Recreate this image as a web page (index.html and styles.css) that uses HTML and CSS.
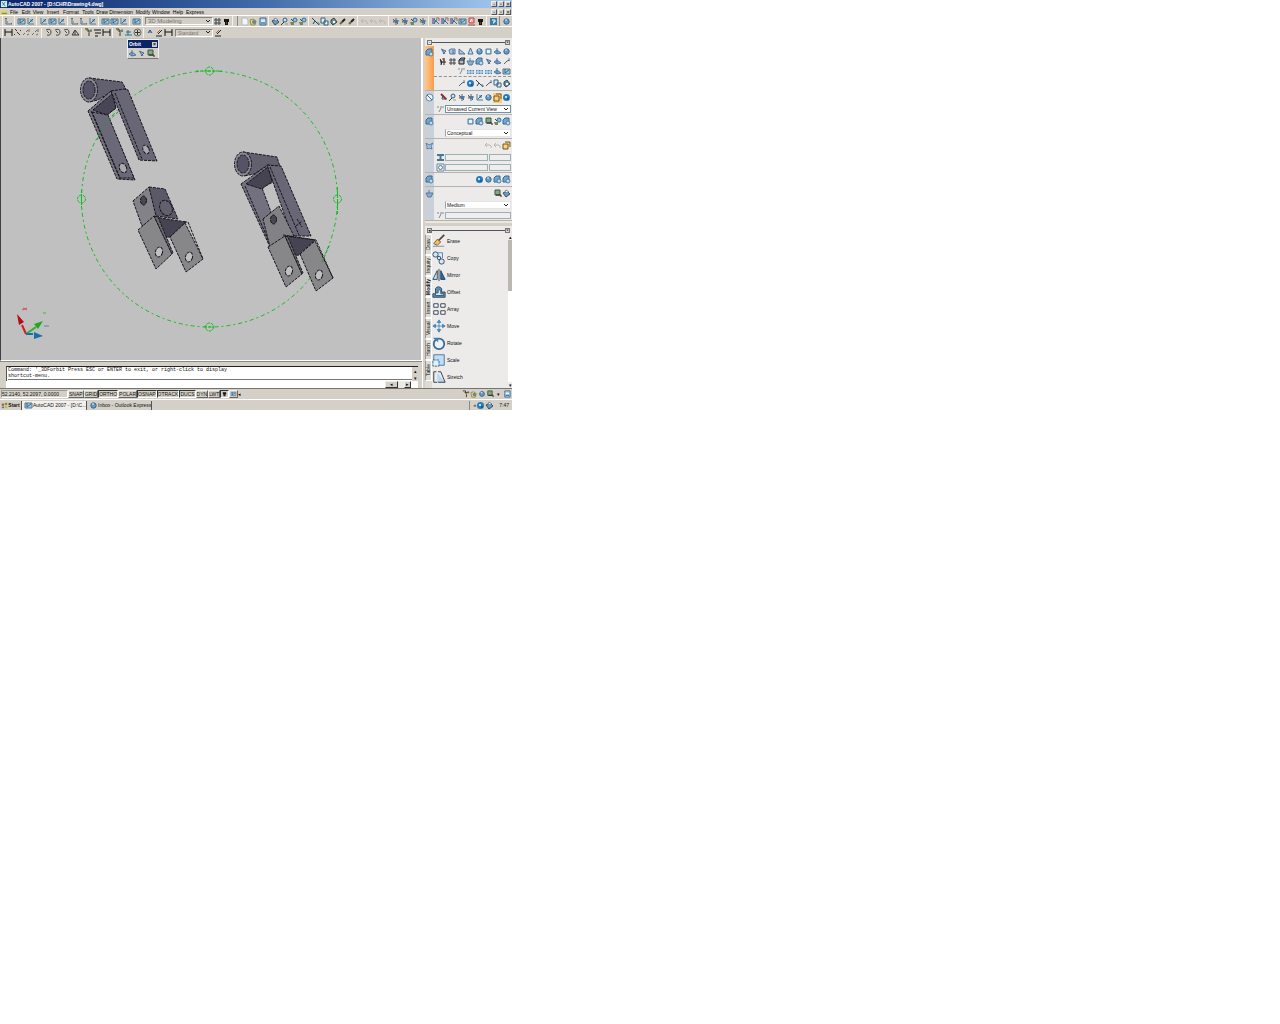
FILE: index.html
```
<!DOCTYPE html>
<html lang="en">
<head>
<meta charset="utf-8">
<title>AutoCAD 2007</title>
<link rel="stylesheet" href="styles.css">
</head>
<body>
<svg class="defs" aria-hidden="true">
<symbol id="ucs" viewBox="0 0 9 9"><path d="M2 1v6h6M1 2l1-1 1 1M7 6l1 1" fill="none" stroke="#536f82"/><path d="M3 5h1" stroke="#2779a7"/></symbol>
<symbol id="ucs2" viewBox="0 0 9 9"><path d="M2 1v6h6" fill="none" stroke="#55788c"/><path d="M4 2h3v3H4z" fill="#7aaecb"/><path d="M3 6l4-4" stroke="#246a96"/></symbol>
<symbol id="view" viewBox="0 0 9 9"><path d="M1 2h7v5H1z" fill="#a7c8d8" stroke="#557589"/><path d="M3 2v4l4-3" fill="none" stroke="#226a98"/></symbol>
<symbol id="page" viewBox="0 0 9 9"><path d="M2 1h4l2 2v5H2z" fill="#f5f7fa" stroke="#b3b9c2"/></symbol>
<symbol id="open" viewBox="0 0 9 9"><path d="M1 3l3-1 3 2-1 4H2z" fill="#f0d468" stroke="#9b8c50"/><circle cx="5" cy="5" r="2" fill="#5d8a9c"/></symbol>
<symbol id="save" viewBox="0 0 9 9"><path d="M2 1h6v7H2z" fill="#b9d4eb" stroke="#336b96"/><path d="M3 4h4" stroke="#fff"/><path d="M3 6h4" stroke="#38556e"/></symbol>
<symbol id="print" viewBox="0 0 9 9"><path d="M1 4l4-2 3 3-4 3z" fill="#6d9ab7" stroke="#394f68"/><path d="M3 3l1-2 3 2" fill="#fff" stroke="#718594"/></symbol>
<symbol id="find" viewBox="0 0 9 9"><circle cx="5" cy="3" r="2" fill="#c8e1f3" stroke="#345f84"/><path d="M4 5L1 8" stroke="#283c4c"/><path d="M5 7h3" stroke="#98a649"/></symbol>
<symbol id="zoomg" viewBox="0 0 9 9"><circle cx="6" cy="3" r="2" fill="#91c0df" stroke="#2f7099"/><path d="M1 5h4v3H2z" fill="#71895a"/><path d="M2 2l2 2" stroke="#304a57"/></symbol>
<symbol id="cut" viewBox="0 0 9 9"><path d="M1 1l7 7M2 7l2-3" stroke="#34424d" fill="none"/><path d="M6 6h2v2" stroke="#477eaa" fill="none"/></symbol>
<symbol id="copy" viewBox="0 0 9 9"><path d="M1 1h4v5H1zM4 4h4v4H4z" fill="#d8ebfa" stroke="#38627f"/></symbol>
<symbol id="paste" viewBox="0 0 9 9"><path d="M2 3l3-2 3 4-4 3-2-2z" fill="#6b929e" stroke="#344850"/><path d="M4 4h2v2H4z" fill="#fff"/></symbol>
<symbol id="brush" viewBox="0 0 9 9"><path d="M7 2L4 5" stroke="#222" stroke-width="2"/><path d="M4 5L2 7" stroke="#6d653c" stroke-width="2"/></symbol>
<symbol id="faint" viewBox="0 0 9 9"><path d="M3 2L1 4l2 2M2 4h4q2 1 1 3" fill="none" stroke="#bab6ae"/></symbol>
<symbol id="pan" viewBox="0 0 9 9"><path d="M5 1v7M2 4h6M2 2l5 5" stroke="#51657a"/><path d="M4 3h3v3H4z" fill="#417db3"/><path d="M2 5h3" stroke="#9c5b32"/></symbol>
<symbol id="tool" viewBox="0 0 9 9"><path d="M1 1h3v6H1z" fill="#8b84ad"/><path d="M3 2l5 5M6 2l-3 5" stroke="#267ba8"/><path d="M5 1h3v3" fill="none" stroke="#a8645a"/></symbol>
<symbol id="red" viewBox="0 0 9 9"><path d="M2 1h5v5H2z" fill="#efb0aa" stroke="#bd4543"/><path d="M1 8h7" stroke="#b9414f"/><path d="M5 2L3 5" stroke="#fff"/></symbol>
<symbol id="tee" viewBox="0 0 9 9"><path d="M2 2h5v3H6v3H3V5H2z" fill="#151515"/><path d="M4 6h1" stroke="#bb6b30"/></symbol>
<symbol id="help" viewBox="0 0 9 9"><path d="M1 1h7v7H1z" fill="#387ba4"/><path d="M3 3h3v2H4" fill="none" stroke="#fff"/><path d="M4 6h1" stroke="#fff"/></symbol>
<symbol id="dim" viewBox="0 0 9 9"><path d="M1 1v7M8 1v7M1 4h7" stroke="#111" fill="none"/></symbol>
<symbol id="dash" viewBox="0 0 9 9"><path d="M2 1l2 2M4 4l3 3M1 6l1 1M7 2l1 1" stroke="#334"/></symbol>
<symbol id="dash2" viewBox="0 0 9 9"><path d="M1 7l2-2M4 4l2-2M7 1v3M5 7l2-1" stroke="#6d6c6a"/></symbol>
<symbol id="arc" viewBox="0 0 9 9"><path d="M2 2q5-2 5 2T3 7M3 3l2 2" fill="none" stroke="#464646"/></symbol>
<symbol id="tri" viewBox="0 0 9 9"><path d="M4 2L1 7h7zM4 3v4" fill="none" stroke="#383838"/></symbol>
<symbol id="bolt" viewBox="0 0 9 9"><path d="M1 1h3v3M4 3h4M5 4v4" stroke="#333" fill="none"/><path d="M2 2l3 3" stroke="#b99d2c"/><path d="M6 2h2" stroke="#588a58"/></symbol>
<symbol id="lines" viewBox="0 0 9 9"><path d="M1 2h7M2 5h6M2 8h3" stroke="#111"/></symbol>
<symbol id="plus" viewBox="0 0 9 9"><circle cx="4.500" cy="4.500" r="3.500" fill="none" stroke="#61665a"/><path d="M2 4.500h5M4.500 2v5" stroke="#333"/></symbol>
<symbol id="level" viewBox="0 0 9 9"><path d="M1 7h7M4 2v5M2 4h5" stroke="#167496"/></symbol>
<symbol id="a" viewBox="0 0 9 9"><path d="M2 5l2-3 2 3M3 4h2" fill="none" stroke="#2755a2"/></symbol>
<symbol id="edit" viewBox="0 0 9 9"><path d="M1 8h6M3 6l4-4" stroke="#222"/><path d="M2 5l3-3" stroke="#b96830"/></symbol>
<symbol id="ball" viewBox="0 0 9 9"><circle cx="4.500" cy="4.500" r="2.700" fill="#6b99c3" stroke="#36658e"/><path d="M3 3h2" stroke="#e5f3ff"/></symbol>
<symbol id="box" viewBox="0 0 9 9"><path d="M1 3l2-1h4v5H2z" fill="#a9c8e2" stroke="#567a9d"/><path d="M5 3v4" stroke="#456b94"/></symbol>
<symbol id="wedge" viewBox="0 0 9 9"><path d="M2 2v5h6z" fill="#a9cae4" stroke="#4c7396"/></symbol>
<symbol id="cone" viewBox="0 0 9 9"><path d="M4.500 1L2 7h5z" fill="#c3daec" stroke="#49739b"/></symbol>
<symbol id="cyl" viewBox="0 0 9 9"><path d="M2 2h5v5H2z" fill="#a7cbe7" stroke="#51789a"/><path d="M3 3h3v3H3z" fill="#e8f4fc"/></symbol>
<symbol id="pyr" viewBox="0 0 9 9"><path d="M4 1v6M1 5l3-2 4 3-4 1z" fill="#83afd5" stroke="#4b76a1"/></symbol>
<symbol id="arrow" viewBox="0 0 9 9"><path d="M2 2l5 2-3 3M3 3l3 4" fill="#9ebddb" stroke="#4b6d8d"/></symbol>
<symbol id="man" viewBox="0 0 9 9"><path d="M1 2l2 3-1 3M5 1v7M3 5h4" stroke="#222"/><path d="M3 2h2v2" stroke="#a43232" fill="none"/></symbol>
<symbol id="hash" viewBox="0 0 9 9"><path d="M3 1v7M6 1v7M1 3h7M1 6h7" stroke="#444"/></symbol>
<symbol id="cubeb" viewBox="0 0 9 9"><path d="M2 3h5v4H2zM2 3l2-2h4L7 3" fill="#b0bac4" stroke="#1b2024"/></symbol>
<symbol id="grid" viewBox="0 0 9 9"><path d="M1 3h7v4H1z" fill="#5089b8"/><path d="M3 3v4M6 3v4M1 5h7" stroke="#d4e8f7"/></symbol>
<symbol id="spark" viewBox="0 0 9 9"><path d="M1 2h2M4 2h4M5 3L3 7" stroke="#7d8a96"/></symbol>
<symbol id="slash" viewBox="0 0 9 9"><path d="M2 7l3-3 3-1" fill="none" stroke="#56616b"/><path d="M6 2h2" stroke="#508bb6"/></symbol>
<symbol id="globe" viewBox="0 0 9 9"><circle cx="4.500" cy="4.500" r="3.500" fill="#267bbb"/><path d="M3 3h2v2H3z" fill="#bce4f8"/><path d="M5 6h2" stroke="#153f71"/></symbol>
<symbol id="redtool" viewBox="0 0 9 9"><path d="M2 1l5 5" stroke="#a72524" stroke-width="2"/><path d="M4 2l-1 4h5" fill="none" stroke="#315073"/></symbol>
<symbol id="lamp" viewBox="0 0 9 9"><path d="M1 2l3 2 4-2-2 3 1 3-3-1-2 1V5z" fill="#a9c6df" stroke="#5c81a3"/></symbol>
<symbol id="green" viewBox="0 0 9 9"><path d="M2 1h5v5H2z" fill="#85aa78" stroke="#36594a"/><path d="M3 6h5v2" fill="none" stroke="#222"/></symbol>
<symbol id="cube" viewBox="0 0 9 9"><path d="M1 3l2-2h4v4L5 7H1z" fill="#71a7ce" stroke="#3c678f"/><circle cx="6" cy="6" r="2" fill="#bfdced" stroke="#4e7fa7"/></symbol>
<symbol id="gold" viewBox="0 0 9 9"><path d="M1 3h5v5H1zM3 1h5v5" fill="#ffd278" stroke="#6c5424"/></symbol>
<symbol id="compass" viewBox="0 0 9 9"><circle cx="4.500" cy="4.500" r="3.500" fill="#edf3f7" stroke="#6787a1"/><path d="M2 2l5 5" stroke="#456d8b"/></symbol>
<symbol id="ibar" viewBox="0 0 9 9"><path d="M1 2h7M1 7h7M4.500 2v5" stroke="#4a7596" stroke-width="2"/></symbol>
<symbol id="clock" viewBox="0 0 9 9"><path d="M1 1h7v7H1z" fill="#eef5f8" stroke="#6d8798"/><circle cx="4.500" cy="4.500" r="2" fill="none" stroke="#587b94"/></symbol>
<symbol id="pot" viewBox="0 0 9 9"><path d="M1 4h7L6 8H3zM4 1v3" fill="#86afd0" stroke="#547b9b"/></symbol>
</svg>

<div class="app">
<header class="titlebar"><svg class="ic" viewBox="0 0 9 9"><path d="M1 1h7v7H1z" fill="#d1eff4"/><path d="M2 2l4 5M6 2L3 6" stroke="#25747e"/></svg><h1>AutoCAD 2007 - [D:\CHR\Drawing4.dwg]</h1><span class="win"><button aria-label="Minimize">-</button><button aria-label="Restore">▫</button><button aria-label="Close">×</button></span></header>
<nav class="menubar"><svg class="ic" viewBox="0 0 9 9"><path d="M1 3h5V1l2 3v4H1z" fill="#ead251"/><path d="M2 6h6" stroke="#397ba7"/></svg><a href="#" class="m-s">File</a><a href="#" class="m-s">Edit</a><a href="#" class="m-s">View</a><a href="#" class="m-l">Insert</a><a href="#" class="m-l">Format</a><a href="#" class="m-m">Tools</a><a href="#" class="m-s">Draw</a><a href="#" class="m-x">Dimension</a><a href="#" class="m-l">Modify</a><a href="#" class="m-l">Window</a><a href="#" class="m-m">Help</a><a href="#" class="m-l">Express</a><span class="win"><button aria-label="Minimize drawing">-</button><button aria-label="Restore drawing">▫</button><button aria-label="Close drawing">×</button></span></nav>

<div class="toolbar">
<div class="group first"><button aria-label="UCS"><svg><use href="#ucs"/></svg></button></div>
<div class="group"><button aria-label="World UCS"><svg><use href="#view"/></svg></button><button aria-label="Previous UCS"><svg><use href="#ucs2"/></svg></button></div>
<div class="group"><button aria-label="Face UCS"><svg><use href="#ucs2"/></svg></button><button aria-label="Object UCS"><svg><use href="#view"/></svg></button><button aria-label="View UCS"><svg><use href="#ucs2"/></svg></button></div>
<div class="group"><button aria-label="Origin"><svg><use href="#ucs"/></svg></button><button aria-label="Z axis"><svg><use href="#ucs"/></svg></button><button aria-label="Three point"><svg><use href="#ucs2"/></svg></button></div>
<div class="group"><button aria-label="Rotate X"><svg><use href="#view"/></svg></button><button aria-label="Rotate Y"><svg><use href="#view"/></svg></button><button aria-label="Rotate Z"><svg><use href="#ucs2"/></svg></button></div>
<div class="group"><button aria-label="Apply UCS"><svg><use href="#view"/></svg></button></div>
<select class="combo wide" aria-label="Workspace"><option>3D Modeling</option></select>
<div class="group"><button aria-label="Workspace settings"><svg><use href="#hash"/></svg></button><button aria-label="My workspace"><svg><use href="#tee"/></svg></button></div>
<div class="group grip"><button aria-label="New"><svg><use href="#page"/></svg></button><button aria-label="Open"><svg><use href="#open"/></svg></button><button aria-label="Save"><svg><use href="#save"/></svg></button></div>
<div class="group"><button aria-label="Print"><svg><use href="#print"/></svg></button><button aria-label="Preview"><svg><use href="#find"/></svg></button><button aria-label="Publish"><svg><use href="#zoomg"/></svg></button><button aria-label="3D DWF"><svg><use href="#zoomg"/></svg></button></div>
<div class="group"><button aria-label="Cut"><svg><use href="#cut"/></svg></button><button aria-label="Copy"><svg><use href="#copy"/></svg></button><button aria-label="Paste"><svg><use href="#paste"/></svg></button><button aria-label="Match properties"><svg><use href="#brush"/></svg></button><button aria-label="Block editor"><svg><use href="#brush"/></svg></button></div>
<div class="group"><button aria-label="Undo"><svg><use href="#faint"/></svg></button><button aria-label="Undo list"><svg><use href="#faint"/></svg></button><button aria-label="Redo"><svg><use href="#faint"/></svg></button></div>
<div class="group"><button aria-label="Pan"><svg><use href="#pan"/></svg></button><button aria-label="Zoom realtime"><svg><use href="#pan"/></svg></button><button aria-label="Zoom window"><svg><use href="#zoomg"/></svg></button><button aria-label="Zoom previous"><svg><use href="#pan"/></svg></button></div>
<div class="group"><button aria-label="Properties"><svg><use href="#tool"/></svg></button><button aria-label="Design center"><svg><use href="#tool"/></svg></button><button aria-label="Tool palettes"><svg><use href="#tool"/></svg></button><button aria-label="Sheet set"><svg><use href="#view"/></svg></button><button aria-label="Markup"><svg><use href="#red"/></svg></button><button aria-label="Calculator"><svg><use href="#tee"/></svg></button></div>
<div class="group last"><button aria-label="Help"><svg><use href="#help"/></svg></button></div>
<div class="group grip last"><button aria-label="Previous"><svg><use href="#ball"/></svg></button></div>
</div>

<div class="toolbar second">
<div class="group first"><button aria-label="Linear"><svg><use href="#dim"/></svg></button><button aria-label="Aligned"><svg><use href="#dash"/></svg></button><button aria-label="Arc length"><svg><use href="#dash2"/></svg></button><button aria-label="Ordinate"><svg><use href="#dash2"/></svg></button></div>
<div class="group"><button aria-label="Radius"><svg><use href="#arc"/></svg></button><button aria-label="Jogged"><svg><use href="#arc"/></svg></button><button aria-label="Diameter"><svg><use href="#arc"/></svg></button><button aria-label="Angular"><svg><use href="#tri"/></svg></button></div>
<div class="group"><button aria-label="Quick dimension"><svg><use href="#bolt"/></svg></button><button aria-label="Baseline"><svg><use href="#lines"/></svg></button><button aria-label="Continue"><svg><use href="#dim"/></svg></button></div>
<div class="group"><button aria-label="Quick leader"><svg><use href="#bolt"/></svg></button><button aria-label="Tolerance"><svg><use href="#level"/></svg></button><button aria-label="Center mark"><svg><use href="#plus"/></svg></button></div>
<div class="group last"><button aria-label="Dimension edit"><svg><use href="#a"/></svg></button><button aria-label="Dimension text edit"><svg><use href="#edit"/></svg></button><button aria-label="Dimension update"><svg><use href="#dim"/></svg></button></div>
<select class="combo" aria-label="Dimension style"><option>Standard</option></select>
<button aria-label="Dimension style manager"><svg><use href="#edit"/></svg></button>
</div>

<main class="work">
<div class="left">
<div class="drawing">
<svg class="model" viewBox="1 38 420 322" role="img" aria-label="3D model of brackets">
<g fill="none" stroke="#10bd20"><circle cx="209.500" cy="199" r="128" stroke-dasharray="4 3 2 3"/><g stroke-dasharray="3 1"><circle cx="209.500" cy="71" r="4"/><circle cx="209.500" cy="327" r="4"/><circle cx="81.500" cy="199" r="4"/><circle cx="337.500" cy="199" r="4"/><path d="M196 71h26M204 327h10M81.500 190v18M337.500 187v27"/></g></g>
<g stroke="#15151b" stroke-dasharray="3 1" stroke-linejoin="round">
<path fill="#62606f" d="M89 78l33 4 5 9-15 0-14 9-9 2z"/><ellipse cx="89" cy="90" rx="8.500" ry="12" fill="#8a8892"/><ellipse cx="89" cy="90" rx="6" ry="9" fill="#555365"/>
<path fill="#777582" d="M88 111l23-20 5 17-9 7 28 65-18-1z"/><path fill="#484656" d="M93 110l19-16 4 14-9 7z"/><path fill="#6b6978" d="M92 112l16 3 26 63-14 0z"/><path fill="#696776" d="M111 91l13-2 4 1 29 71-18-1z"/><path d="M115 93l27 66M91 111l29 68" fill="none"/>
<ellipse cx="123" cy="168" rx="3.500" ry="5" transform="rotate(-25 123 168)" fill="#aaa9ae"/><ellipse cx="146" cy="149.500" rx="3" ry="4.500" transform="rotate(-25 146 149.500)" fill="#aaa9ae"/>
<path fill="#828288" d="M133 201l16-14 9 29-16 10z"/><path fill="#5b5968" d="M149 187l16 2 13 30-22-3z"/><ellipse cx="143.500" cy="200.500" rx="3" ry="4.500" fill="#484750"/><ellipse cx="166" cy="208" rx="6" ry="8" transform="rotate(-25 166 208)" fill="#62606d"/>
<path fill="#464453" d="M155 217l31 5-16 15-8 1z"/><path fill="#87878a" d="M138 230l16-14 18 38-16 15z"/><path fill="#69696f" d="M154 216l4 1 15 36-1 1z"/><path fill="#87878a" d="M170 237l15-14 18 36-17 13z"/><path d="M184 222l4 0 15 37" fill="none"/><ellipse cx="159" cy="252" rx="3.500" ry="5" transform="rotate(15 159 252)" fill="#c0c0c0"/><ellipse cx="189" cy="257" rx="3.500" ry="5" transform="rotate(15 189 257)" fill="#c0c0c0"/>
<path fill="#62606f" d="M243 152l34 5 3 10-12-2-14 9-10 2z"/><ellipse cx="243" cy="164" rx="8.500" ry="12" fill="#8a8892"/><ellipse cx="243" cy="164" rx="6" ry="9" fill="#555365"/>
<path fill="#737180" d="M241 184l27-19 5 17-11 6 9 24-7 8 8 25-2 2z"/><path fill="#464453" d="M246 184l22-17 4 14-10 8z"/><path fill="#696776" d="M267 165l14 1 30 70-19 0z"/><path d="M270 167l29 68M245 186l25 58" fill="none"/>
<path fill="#828286" d="M263 219l16-13 15 30-9 1-15 10z"/><ellipse cx="273.500" cy="219.500" rx="3" ry="4.500" fill="#484750"/><path d="M297 219l5 8m-6-1l6-5" fill="none"/><path fill="#464453" d="M285 236l30 4-16 15-9 1z"/><path fill="#87878a" d="M268 247l17-11 17 38-16 13z"/><path fill="#69696f" d="M285 236l3 1 15 36-1 1z"/><path fill="#87878a" d="M300 254l15-13 18 37-17 13z"/><path d="M283 235l33 5 17 38" fill="none"/><ellipse cx="289" cy="271" rx="3.500" ry="5" transform="rotate(15 289 271)" fill="#c0c0c0"/><ellipse cx="319" cy="275" rx="3.500" ry="5" transform="rotate(15 319 275)" fill="#c0c0c0"/>
</g>
<path d="M105 124l14-13M97 140l7-15M322 262l8-18" stroke="#2f8f3f" stroke-dasharray="3 2" fill="none"/>
<path d="M26 334l-4-9" stroke="#d71b1b" stroke-width="2"/><path d="M17 314l7 8-5 3z" fill="#b10f14"/><path d="M26 334l10-7" stroke="#26b52b" stroke-width="2"/><path d="M43 321l-9 3 4 5z" fill="#22a724"/><path d="M26 334h7" stroke="#176fae" stroke-width="2"/><path d="M43 336l-9-4v7z" fill="#176fae"/><path d="M22 310l5-2m-4 0l4 2" stroke="#c95858"/><path d="M43 313h3" stroke="#4bb54b"/><path d="M44 326h5" stroke="#3a92c6"/>
</svg>
<section class="orbit"><h2>Orbit<button aria-label="Close Orbit">×</button></h2><div><button aria-label="Constrained orbit"><svg><use href="#pyr"/></svg></button><button aria-label="Free orbit"><svg><use href="#arrow"/></svg></button><button aria-label="Continuous orbit"><svg><use href="#green"/></svg></button></div></section>
</div>
<section class="command"><div class="cmdbox"><div class="cmdtext"><p>Command: '_3DForbit Press ESC or ENTER to exit, or right-click to display</p><p>shortcut-menu.</p><input aria-label="Command line"></div><div class="cmdscroll"><button aria-label="Scroll up">▴</button><button aria-label="Scroll down">▾</button></div></div><div class="hscroll"><button class="wideb" aria-label="Scroll left">◂</button><i></i><button aria-label="Scroll right">▸</button></div></section>
</div>

<aside class="side">
<div class="pin"><button aria-label="Dashboard options">-</button><hr><button aria-label="Close dashboard">×</button></div>
<div class="dashboard">
<section class="panel active"><svg class="mark"><use href="#cube"/></svg><div class="rows">
<div class="row"><button aria-label="Polysolid"><svg><use href="#arrow"/></svg></button><button aria-label="Box"><svg><use href="#box"/></svg></button><button aria-label="Wedge"><svg><use href="#wedge"/></svg></button><button aria-label="Cone"><svg><use href="#cone"/></svg></button><button aria-label="Sphere"><svg><use href="#ball"/></svg></button><button aria-label="Cylinder"><svg><use href="#cyl"/></svg></button><button aria-label="Pyramid"><svg><use href="#pyr"/></svg></button><button aria-label="Torus"><svg><use href="#ball"/></svg></button></div>
<div class="row"><button aria-label="Walk"><svg><use href="#man"/></svg></button><button aria-label="Helix"><svg><use href="#hash"/></svg></button><button aria-label="Plane"><svg><use href="#cubeb"/></svg></button><button aria-label="Extrude"><svg><use href="#pot"/></svg></button><button aria-label="Press pull"><svg><use href="#cube"/></svg></button><button aria-label="Sweep"><svg><use href="#arrow"/></svg></button><button aria-label="Revolve"><svg><use href="#pyr"/></svg></button><button aria-label="Loft"><svg><use href="#slash"/></svg></button></div>
<div class="row"><button aria-label="Section"><svg><use href="#spark"/></svg></button><button aria-label="Union"><svg><use href="#grid"/></svg></button><button aria-label="Subtract"><svg><use href="#grid"/></svg></button><button aria-label="Intersect"><svg><use href="#grid"/></svg></button><button aria-label="Interfere"><svg><use href="#pyr"/></svg></button><button aria-label="Slice"><svg><use href="#view"/></svg></button></div>
<hr class="dashed">
<div class="row tall"><button aria-label="3D move"><svg><use href="#slash"/></svg></button><button aria-label="3D rotate"><svg><use href="#globe"/></svg></button><button aria-label="3D align"><svg><use href="#cut"/></svg></button><button aria-label="Flatshot"><svg><use href="#slash"/></svg></button><button aria-label="Copy edges"><svg><use href="#copy"/></svg></button><button aria-label="Edit solid"><svg><use href="#paste"/></svg></button></div>
</div></section>
<section class="panel"><svg class="mark"><use href="#compass"/></svg><div class="rows">
<div class="row tall"><button aria-label="Perspective"><svg><use href="#redtool"/></svg></button><button aria-label="Parallel"><svg><use href="#find"/></svg></button><button aria-label="Pan view"><svg><use href="#pan"/></svg></button><button aria-label="Zoom view"><svg><use href="#pan"/></svg></button><button aria-label="Swivel"><svg><use href="#ucs2"/></svg></button><button aria-label="Orbit view"><svg><use href="#ball"/></svg></button><button class="on" aria-label="Camera"><svg><use href="#gold"/></svg></button><button aria-label="Named view"><svg><use href="#globe"/></svg></button></div>
<div class="row field"><svg><use href="#spark"/></svg><select class="blueb" aria-label="Current view"><option>Unsaved Current View</option></select></div>
</div></section>
<section class="panel"><svg class="mark"><use href="#cube"/></svg><div class="rows">
<div class="row tall"><button aria-label="Wireframe"><svg><use href="#cyl"/></svg></button><button aria-label="Hidden"><svg><use href="#cube"/></svg></button><button aria-label="Shadows"><svg><use href="#green"/></svg></button><button aria-label="X-ray"><svg><use href="#zoomg"/></svg></button><button aria-label="Edge styles"><svg><use href="#cube"/></svg></button></div>
<div class="row field"><select aria-label="Visual style"><option>Conceptual</option></select></div>
</div></section>
<section class="panel"><svg class="mark"><use href="#lamp"/></svg><div class="rows">
<div class="row tall"><button aria-label="Point light"><svg><use href="#faint"/></svg></button><button aria-label="Spot light"><svg><use href="#faint"/></svg></button><button aria-label="Sun"><svg><use href="#gold"/></svg></button></div>
<div class="row field"><svg><use href="#ibar"/></svg><input class="long" aria-label="Brightness"><input class="short" aria-label="Brightness value"></div>
<div class="row field"><svg><use href="#clock"/></svg><input class="long" aria-label="Time"><input class="short" aria-label="Time value"></div>
</div></section>
<section class="panel"><svg class="mark"><use href="#cube"/></svg><div class="rows"><div class="row tall"><button aria-label="Materials"><svg><use href="#globe"/></svg></button><button aria-label="Texture"><svg><use href="#ball"/></svg></button><button aria-label="Mapping"><svg><use href="#cube"/></svg></button><button aria-label="Attach"><svg><use href="#cube"/></svg></button></div></div></section>
<section class="panel"><svg class="mark"><use href="#pot"/></svg><div class="rows">
<div class="row tall"><button aria-label="Render"><svg><use href="#green"/></svg></button><button aria-label="Render output"><svg><use href="#print"/></svg></button></div>
<div class="row field"><select aria-label="Render preset"><option>Medium</option></select></div>
<div class="row field"><svg><use href="#spark"/></svg><input class="full" aria-label="Render progress"></div>
</div></section>
</div>
<div class="divider"></div>
<div class="pin"><button aria-label="Palette options">◂</button><hr><button aria-label="Close palette">×</button></div>
<div class="palette">
<div class="tabs"><button>Draw</button><button>Inquiry</button><button class="sel">Modify</button><button>Insert</button><button>Visual</button><button>Hatch</button><button>Table</button></div>
<div class="tools">
<button><svg viewBox="0 0 16 16"><path d="M14 1L7 8" stroke="#444" stroke-width="2"/><path d="M2 11l4-5 4 3-4 4z" fill="#e8c16d" stroke="#795821"/><path d="M1 14h13" stroke="#778895"/></svg>Erase</button>
<button><svg viewBox="0 0 16 16"><g fill="#d6e6f4" stroke="#24425b"><circle cx="4" cy="4" r="3"/><circle cx="8" cy="8" r="2"/><circle cx="11" cy="12" r="3"/></g><path d="M7 2h5v6" fill="none" stroke="#3f7dbb"/></svg>Copy</button>
<button><svg viewBox="0 0 16 16"><path d="M6 3v10H1z" fill="#cce5f5" stroke="#1d3b54"/><path d="M10 3v10h5z" fill="#276ca8" stroke="#173b60"/><path d="M8 1v14" stroke="#333"/></svg>Mirror</button>
<button><svg viewBox="0 0 16 16"><path d="M1 14v-4h3V4q3-4 7 0v4h4v6z" fill="#648dac" stroke="#28445e"/><path d="M4 12V9h3V6q2-2 3 1v3h3v2z" fill="#d4e9f8" stroke="#31556f"/></svg>Offset</button>
<button><svg viewBox="0 0 16 16"><path d="M2 2h5v4H2zM10 2h5v4h-5zM2 10h5v4H2zM10 10h5v4h-5z" fill="#f5faff" stroke="#293441"/></svg>Array</button>
<button><svg viewBox="0 0 16 16"><path d="M8 2v13M2 8h13M8 1L6 4h4zM8 15l-2-3h4zM1 8l3-2v4zM15 8l-3-2v4z" fill="#4c92cb" stroke="#4787b7"/></svg>Move</button>
<button><svg viewBox="0 0 16 16"><circle cx="8" cy="9" r="6" fill="#e9f2f9" stroke="#3c678d" stroke-width="2"/><path d="M1 2h6v5z" fill="#3c7db3"/></svg>Rotate</button>
<button><svg viewBox="0 0 16 16"><path d="M2 2h12v12H2z" fill="#bddef8" stroke="#447194"/><path d="M1 8h7v7H1z" fill="#ddf1ff" stroke="#3c5971" stroke-dasharray="3 1"/></svg>Scale</button>
<button><svg viewBox="0 0 16 16"><path d="M6 3l9 11H6z" fill="#b8d9f3"/><path d="M5 2H2v12h4M7 2h3l5 12H7" fill="none" stroke="#222f3a"/></svg>Stretch</button>
</div>
<div class="vscroll"><button aria-label="Scroll tools up">▴</button><i></i><b></b><button aria-label="Scroll tools down">▾</button></div>
</div>
</aside>
</main>

<div class="status"><span class="coords">52.2140, 52.2097, 0.0000</span><button>SNAP</button><button>GRID</button><button class="down">ORTHO</button><button>POLAR</button><button class="down">OSNAP</button><button class="down">OTRACK</button><button class="down">DUCS</button><button>DYN</button><button>LWT</button><button class="down" aria-label="Model"><svg><use href="#tee"/></svg></button><button aria-label="Layout"><svg><use href="#view"/></svg></button><span>◂</span><span class="tray"><svg><use href="#bolt"/></svg><svg><use href="#open"/></svg><svg><use href="#ball"/></svg><svg><use href="#green"/></svg><span>▾</span><svg><use href="#save"/></svg></span></div>
<footer class="taskbar"><button class="start"><svg viewBox="0 0 9 9"><path d="M1 2h3v3H1z" fill="#b65b2d"/><path d="M5 1h3v3H5z" fill="#639c38"/><path d="M1 6h3v2H1z" fill="#397fae"/><path d="M5 5h3v3H5z" fill="#d8b22c"/></svg>Start</button><button class="task current"><svg><use href="#view"/></svg>AutoCAD 2007 - [D:\C...</button><button class="task"><svg><use href="#ball"/></svg>Inbox - Outlook Express</button><span class="clock">«<svg><use href="#globe"/></svg><svg><use href="#print"/></svg><span>7:47</span></span></footer>
</div>
</body>
</html>
```
FILE: styles.css
```
* { box-sizing: border-box; }
body { margin: 0; background: #fff; font: 5px/8px "Liberation Sans", Arial, sans-serif; color: #111; }
.defs { display: none; }
.app { width: 40%; background: #d4d0c8; }
button, select, input { font: inherit; color: inherit; margin: 0; padding: 0; border: 0; border-radius: 0; background: none; min-width: 0; }
button { display: flex; align-items: center; justify-content: center; flex: none; }
svg { flex: none; width: 9px; height: 9px; }
hr { margin: 0; border: 0; }
p { margin: 0; }
h1, h2 { margin: 0; font: inherit; }

.titlebar { display: flex; align-items: center; height: 8px; background: linear-gradient(90deg, #0a246a, #3f69a8 50%, #a6caf0); color: #fff; }
.titlebar h1 { font-weight: bold; white-space: nowrap; }
.ic { width: 8px; height: 8px; }
.win { display: flex; gap: 1px; margin-left: auto; padding-right: 1px; }
.win button { width: 6px; height: 6px; background: #d4d0c8; border: 1px solid #eee; border-right-color: #555; border-bottom-color: #555; color: #000; line-height: 4px; }
.menubar { display: flex; align-items: center; height: 7px; }
.menubar a { color: #000; text-decoration: none; text-align: center; white-space: nowrap; }
.m-s { width: 12px; }
.m-m { width: 16px; }
.m-l { width: 18px; }
.m-x { width: 26px; }

.toolbar { display: flex; align-items: center; height: 11px; padding-left: 2px; border-top: 1px solid #fff; overflow: hidden; }
.toolbar button { width: 9px; height: 10px; }
.toolbar.second { height: 12px; }
.group { display: flex; flex: none; padding-right: 1px; border-right: 1px solid #f4f2ee; margin-right: 2px; }
.group.first { border-left: 1px solid #f4f2ee; padding-left: 1px; }
.group.grip { border-left: 1px solid #8a8780; padding-left: 2px; margin-left: 2px; }
.toolbar .last { margin: 0; border-right: 0; }
select { appearance: none; background: #fff url("data:image/svg+xml,%3Csvg xmlns='http://www.w3.org/2000/svg' width='7' height='5'%3E%3Cpath d='M1 1l2 2 2-2' fill='none' stroke='%23222'/%3E%3C/svg%3E") no-repeat right center; }
.combo { width: 38px; height: 8px; margin: 0 1px; padding-left: 2px; background-color: #d4d0c8; border: 1px solid #85827c; border-right-color: #fff; border-bottom-color: #fff; color: #77736c; line-height: 6px; }
.combo.wide { width: 69px; margin: 0; font-size: 6px; }

.work { display: grid; grid-template-columns: minmax(0, 1fr) 90px; }
.left { display: flex; flex-direction: column; min-height: 0; }
.drawing { position: relative; flex: 1; min-height: 0; background: #c0c0c0; border-left: 1px solid #404040; border-right: 1px solid #fff; border-bottom: 1px solid #fff; }
.model { display: block; width: 100%; height: 322px; }
.orbit { position: absolute; top: 1px; left: 30%; width: 32px; background: #d4d0c8; border: 1px solid #eee; border-bottom-color: #777; }
.orbit h2 { display: flex; justify-content: space-between; align-items: center; height: 8px; padding: 0 1px; background: #0a246a; color: #fff; font-weight: bold; }
.orbit h2 button { width: 5px; height: 5px; background: #d4d0c8; color: #000; line-height: 5px; }
.orbit div { display: flex; height: 10px; align-items: center; }
.command { display: flex; flex-direction: column; height: 27px; padding: 4px 4px 0 6px; border-top: 1px solid #8b8882; }
.cmdbox { display: flex; height: 15px; background: #fff; border-top: 1px solid #222; border-left: 1px solid #555; }
.cmdtext { flex: 1; font: 5px/6px "Liberation Mono", monospace; padding-left: 1px; }
.cmdtext input { display: block; width: 100%; height: 2px; border-top: 1px solid #777; }
.cmdscroll { width: 6px; background: #eceae6; }
.cmdscroll button { width: 6px; height: 7px; background: #d4d0c8; line-height: 6px; }
.hscroll { display: flex; height: 7px; justify-content: flex-end; padding-right: 7px; background: #fff; }
.hscroll button { width: 7px; background: #d4d0c8; border: 1px solid #eee; border-right-color: #333; border-bottom-color: #333; line-height: 5px; }
.hscroll .wideb { width: 13px; }
.hscroll i { width: 6px; background: #eceae6; }

.side { border-left: 1px solid #fff; padding-left: 2px; background: #d4d0c8; }
.pin { display: flex; align-items: center; height: 8px; padding: 0 2px; background: #eceae8; }
.pin hr { flex: 1; height: 1px; background: #555; }
.pin button { width: 5px; height: 5px; border: 1px solid #777; line-height: 4px; }
.dashboard { background: #ecebe9; }
.panel { display: flex; align-items: flex-start; border-bottom: 1px solid #b5b3af; background: linear-gradient(90deg, #c9d0da 9px, #ecebe9 9px); }
.panel.active { background: linear-gradient(90deg, #ffc88c, #f79c49 9px, #ecebe9 9px); }
.mark { width: 9px; height: 13px; }
.rows { flex: 1; min-width: 0; padding-right: 1px; }
.row { display: flex; justify-content: flex-end; align-items: center; height: 10px; }
.row button { width: 9px; height: 10px; }
.row.tall { height: 13px; }
.row button.on { background: #ffc779; }
.dashed { border-top: 1px dashed #96938e; }
.field select { width: 66px; height: 8px; padding-left: 1px; border: 1px solid #e6e5e3; border-left-color: #92a5aa; line-height: 6px; }
.field select.blueb { border-color: #6f92a5; }
.field input { height: 7px; border: 1px solid #9bb0b5; background: #efeeec; }
.long { width: 43px; border-right-color: #ddd; }
.short { width: 22px; margin-left: 1px; }
.full { width: 66px; }
.divider { height: 5px; background: #d4d0c8; border-top: 2px solid #ece9dc; }
.palette { display: grid; grid-template-columns: 7px 1fr 4px; height: 154px; background: #ecebe9; }
.tabs { display: flex; flex-direction: column; background: #dedbd6; }
.tabs button { height: 21px; writing-mode: vertical-rl; transform: rotate(180deg); border: 1px solid #fff; border-right-color: #999; line-height: 5px; }
.tabs .sel { font-weight: bold; background: #ecebe9; }
.tools { display: flex; flex-direction: column; margin-top: -2px; }
.tools button { height: 17px; justify-content: flex-start; gap: 1px; }
.tools svg { width: 14px; height: 14px; }
.vscroll { display: flex; flex-direction: column; background: #fff; }
.vscroll button { height: 6px; background: #ecebe9; }
.vscroll i { height: 51px; background: #bbb8b1; }
.vscroll b { flex: 1; }

.status { display: flex; align-items: center; height: 11px; padding: 1px; border-top: 1px solid #77746e; }
.coords { width: 67px; border: 1px solid #999; border-right-color: #fff; border-bottom-color: #fff; line-height: 6px; }
.status button { height: 8px; border: 1px solid #eee; border-right-color: #666; border-bottom-color: #666; line-height: 6px; }
.status button.down { border-color: #333 #fff #fff #333; }
.status button svg { width: 7px; height: 6px; }
.tray { display: flex; align-items: center; margin-left: auto; }
.tray svg { width: 8px; height: 8px; }
.tray span { padding: 0 3px; }
.taskbar { display: flex; align-items: center; height: 11px; border-top: 1px solid #fff; }
.start { width: 22px; font-weight: bold; border-right: 1px solid #555; }
.start svg { width: 7px; }
.task { width: 65px; justify-content: flex-start; white-space: nowrap; border-right: 1px solid #555; padding-left: 2px; }
.task.current { background: #f2f0ed; }
.clock { display: flex; align-items: center; margin-left: auto; padding: 0 3px; border-left: 1px solid #888; }
.clock span { padding-left: 5px; }
```
